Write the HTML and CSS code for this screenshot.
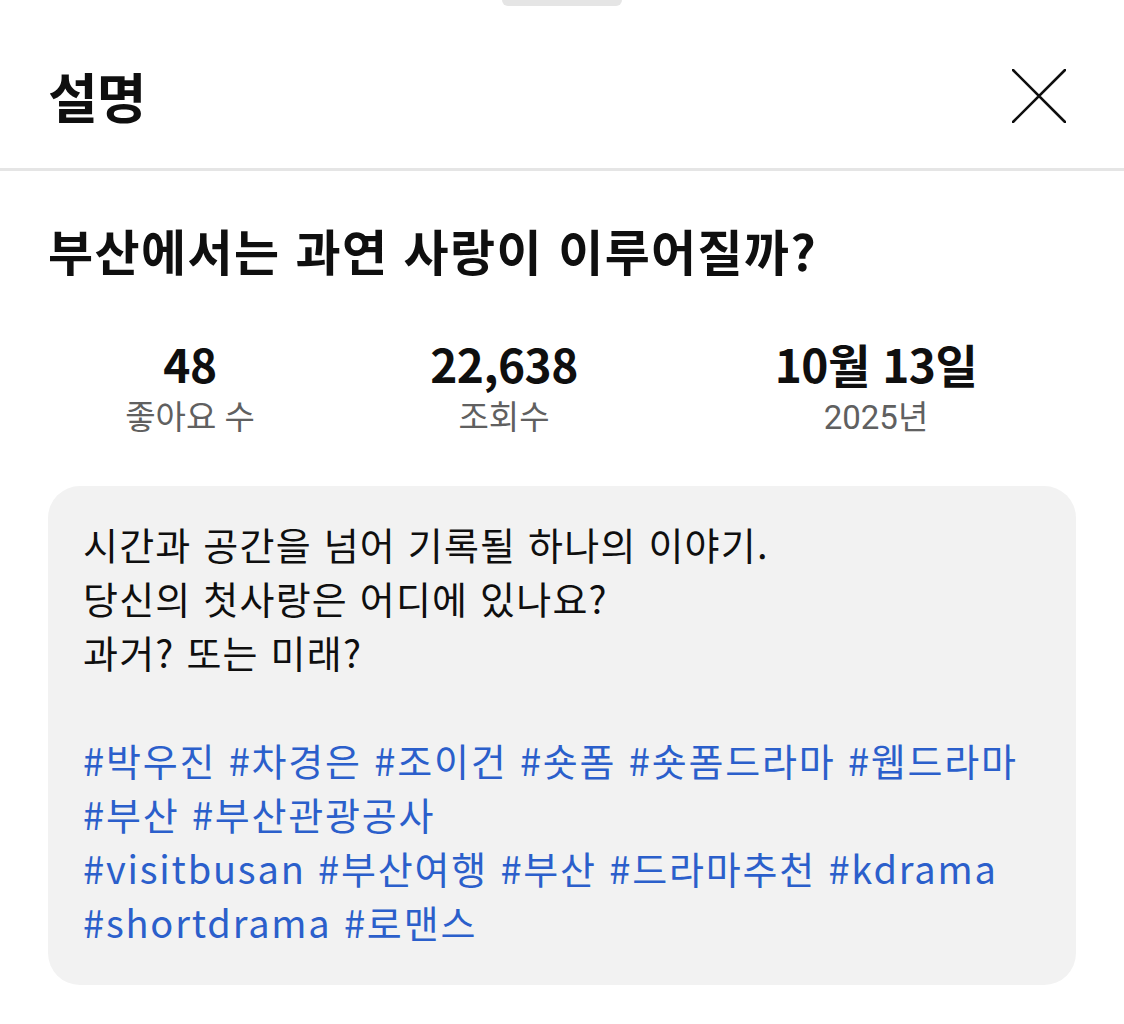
FILE: index.html
```html
<!DOCTYPE html>
<html lang="ko">
<head>
    <meta charset="UTF-8">
    <meta name="viewport" content="width=device-width, initial-scale=1.0">
    <title>설명</title>
    <link rel="stylesheet" href="styles.css">
</head>
<body>
    <div class="sheet">
        <div class="sheet-handle"></div>

        <div class="sheet-header">
            <h1 class="sheet-title">설명</h1>
            <button class="close-btn" aria-label="닫기">
                <svg width="54" height="54" viewBox="0 0 54 54">
                    <path d="M1 1 L53 53 M53 1 L1 53" stroke="#0f0f0f" stroke-width="2.6" stroke-linecap="round" fill="none"/>
                </svg>
            </button>
        </div>

        <div class="sheet-body">
            <h2 class="video-title">부산에서는 과연 사랑이 이루어질까?</h2>

            <div class="stats">
                <div class="stat">
                    <div class="stat-value">48</div>
                    <div class="stat-label">좋아요 수</div>
                </div>
                <div class="stat">
                    <div class="stat-value">22,638</div>
                    <div class="stat-label">조회수</div>
                </div>
                <div class="stat">
                    <div class="stat-value">10월 13일</div>
                    <div class="stat-label">2025년</div>
                </div>
            </div>

            <!-- description box -->
            <div class="description">
                <p>시간과 공간을 넘어 기록될 하나의 이야기.<br>당신의 첫사랑은 어디에 있나요?<br>과거? 또는 미래?</p>
                <p class="tags">
                    <a href="#">#박우진</a> <a href="#">#차경은</a> <a href="#">#조이건</a> <a href="#">#숏폼</a> <a href="#">#숏폼드라마</a> <a href="#">#웹드라마</a><br>
                    <a href="#">#부산</a> <a href="#">#부산관광공사</a><br>
                    <a href="#">#visitbusan</a> <a href="#">#부산여행</a> <a href="#">#부산</a> <a href="#">#드라마추천</a> <a href="#">#kdrama</a><br>
                    <a href="#">#shortdrama</a> <a href="#">#로맨스</a>
                </p>
            </div>
        </div>
    </div>
</body>
</html>
```

FILE: styles.css
```css
body {
    margin: 0;
    background-color: #fff;
    font-family: "Noto Sans CJK KR", "Noto Sans", sans-serif;
    color: #0f0f0f;
}

.sheet {
    width: 1124px;
    min-height: 1024px;
}

.sheet-handle {
    width: 120px;
    height: 6px;
    margin: 0 auto;
    background-color: #e5e5e5;
    border-radius: 0 0 6px 6px;
}

.sheet-header {
    display: flex;
    justify-content: space-between;
    align-items: center;
    height: 144px;
    padding: 18px 58px 0 48px;
    border-bottom: 3px solid #e5e5e5;
}

.sheet-title {
    margin: 0;
    font-size: 54px;
    font-weight: 700;
    letter-spacing: -1px;
    line-height: 1;
}

.close-btn {
    display: flex;
    padding: 0;
    border: none;
    background: none;
}

.sheet-body {
    padding: 0 48px;
}

.video-title {
    margin: 49px 0 0;
    font-size: 49px;
    font-weight: 700;
    letter-spacing: 1.4px;
    line-height: 60px;
}

.stats {
    display: grid;
    grid-template-columns: 284px 344px 1fr;
    margin-top: 58px;
}

.stat {
    display: flex;
    flex-direction: column;
    align-items: center;
}

.stat-value {
    font-size: 46px;
    font-weight: 700;
    letter-spacing: -0.5px;
    line-height: 50px;
}

.stat-label {
    margin-top: 10px;
    font-family: Roboto, "Noto Sans CJK KR", sans-serif;
    font-size: 33px;
    color: #606060;
    line-height: 40px;
}

.description {
    margin-top: 48px;
    padding: 31px 35px 36px;
    background-color: #f2f2f2;
    border-radius: 32px;
    font-size: 38px;
    letter-spacing: 1.2px;
    line-height: 54px;
}

.description p {
    margin: 0;
}

.description .tags {
    margin-top: 54px;
    letter-spacing: 1.8px;
}

.tags a {
    color: #2b5fcb;
    text-decoration: none;
}
```
